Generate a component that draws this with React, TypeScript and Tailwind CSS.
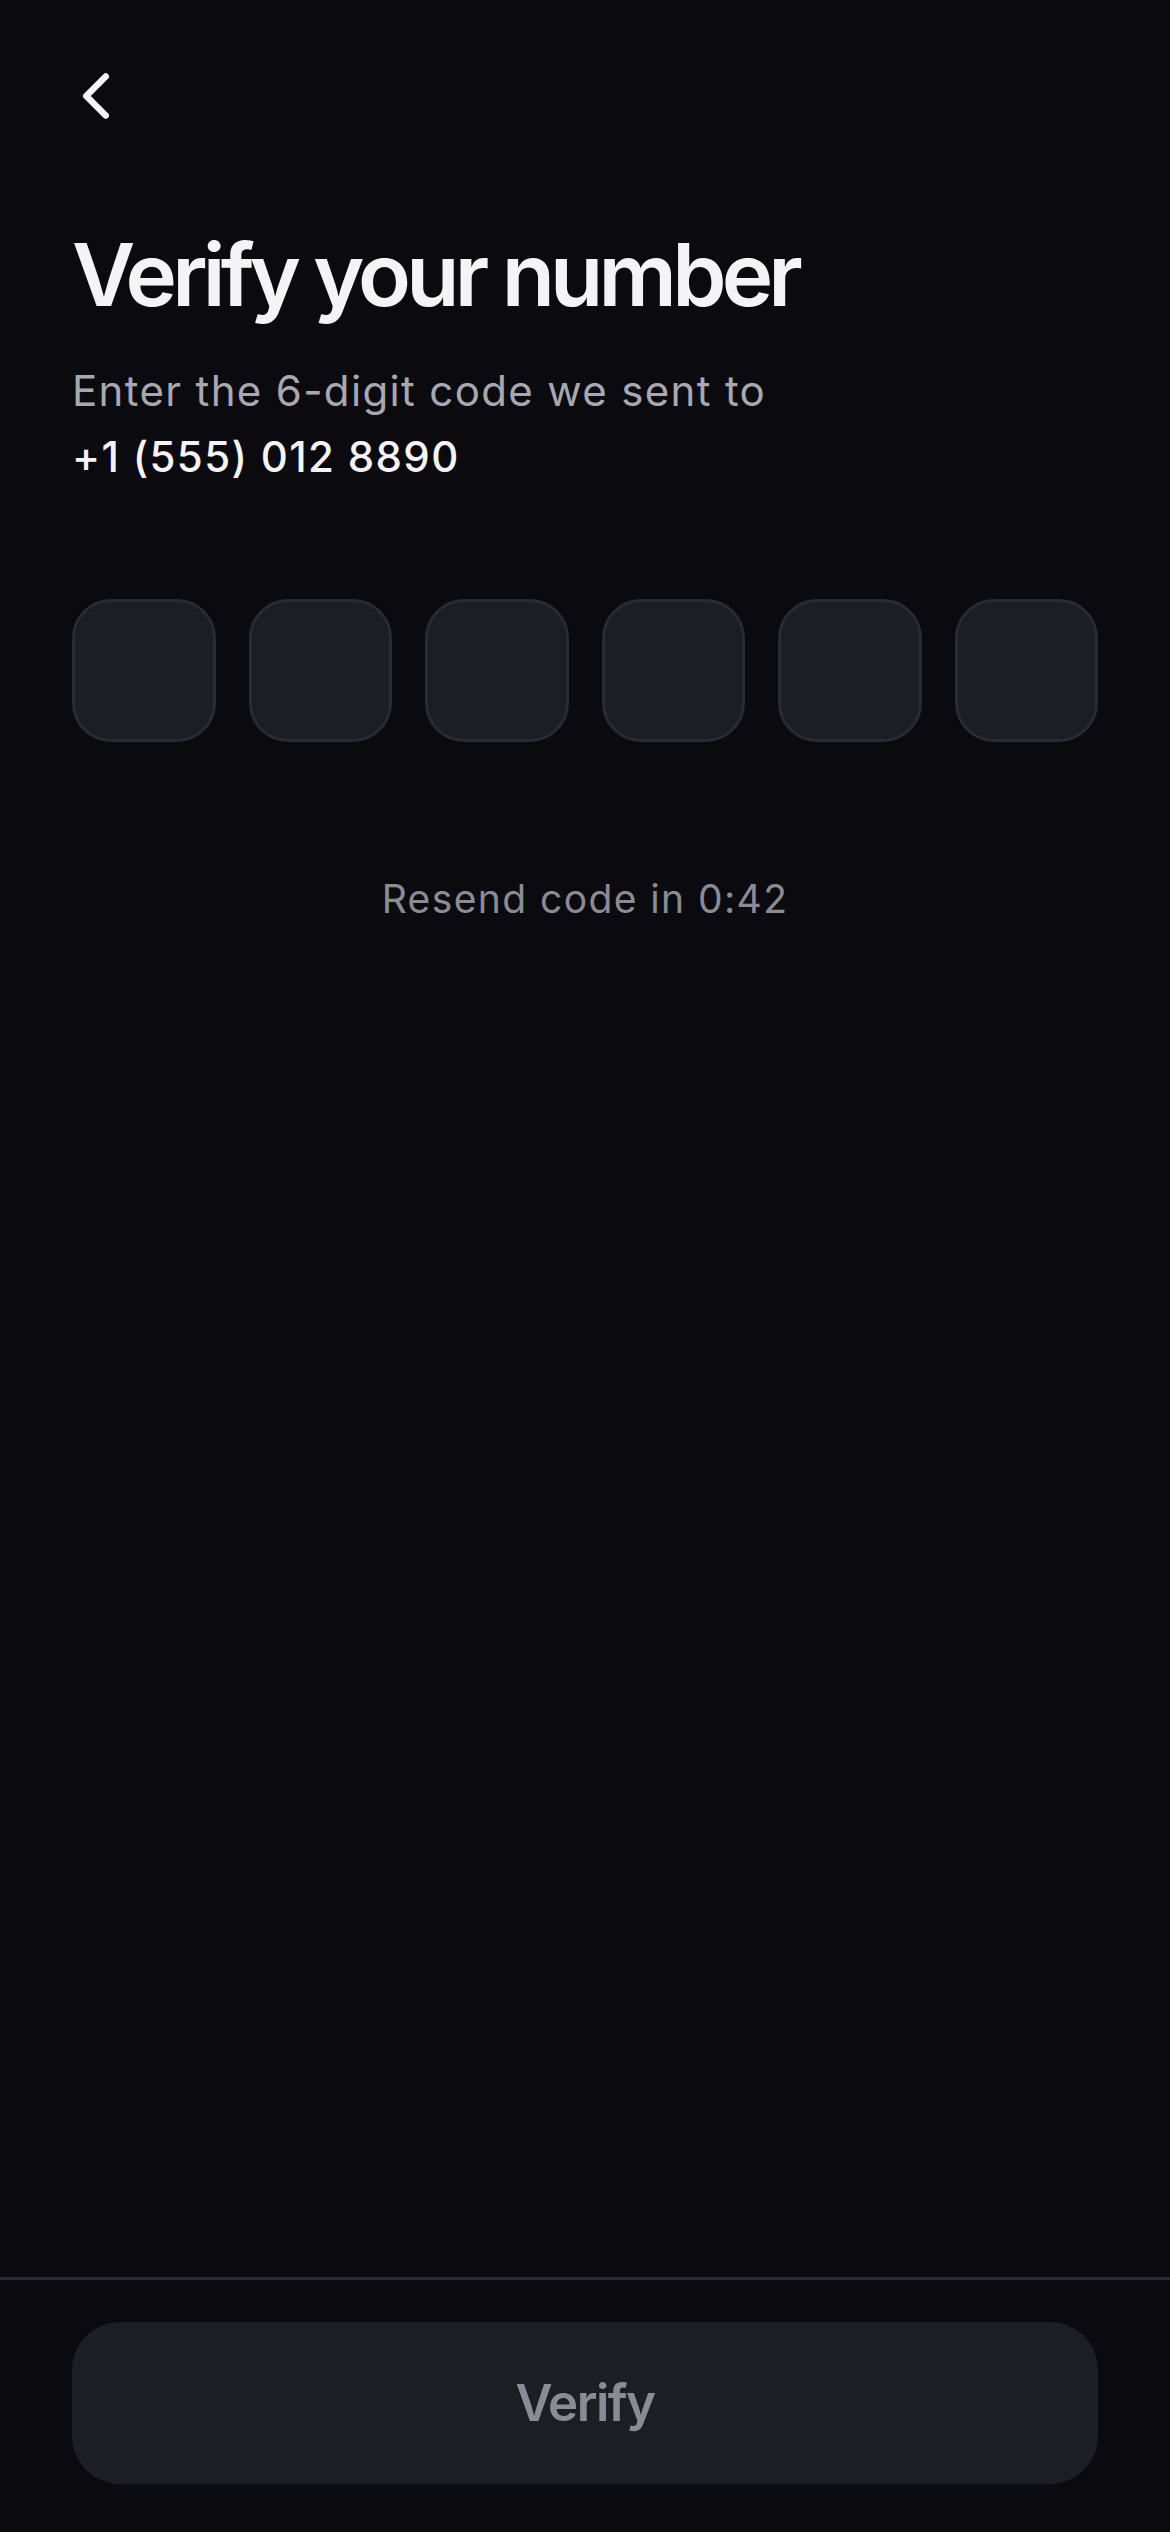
import React from "react";

const OtpBox: React.FC = () => (
  <div className="h-[143px] flex-1 rounded-[39px] border-[3px] border-[#2a2a32] bg-[#1d1d24]" />
);

const App: React.FC = () => {
  const digits = [0, 1, 2, 3, 4, 5];

  return (
    <div className="flex min-h-[2532px] w-full flex-col bg-[#0b0b0f] font-['Inter',sans-serif] text-[#f4f4f6]">
      {/* header */}
      <div className="pl-[57px] pt-[57px]">
        <button className="flex h-[78px] w-[78px] items-center justify-center">
          <svg width="78" height="78" viewBox="0 0 24 24" fill="none">
            <path
              d="m15 18-6-6 6-6"
              stroke="#f4f4f6"
              strokeWidth="2"
              strokeLinecap="round"
              strokeLinejoin="round"
            />
          </svg>
        </button>
      </div>

      <div className="px-[72px]">
        <h1 className="mt-[92px] text-[87px] font-semibold leading-[96px] tracking-[-0.055em]">
          Verify your number
        </h1>
        <p className="mt-[35px] text-[42px] leading-[66px] tracking-[0.032em] text-[#a8a8b3]">
          Enter the 6-digit code we sent to
          <br />
          <span className="font-medium text-[#f4f4f6]">+1 (555) 012 8890</span>
        </p>

        <div className="mt-[109px] flex gap-[33px]">
          {digits.map((d) => (
            <OtpBox key={d} />
          ))}
        </div>

        <p className="mt-[128px] text-center text-[39px] leading-[58px] tracking-[0.036em] text-[#8b8b96]">
          Resend code in 0:42
        </p>
      </div>

      <div className="flex-1" />

      {/* footer */}
      <div className="border-t-[3px] border-[#2a2a32] px-[72px] pb-[48px] pt-[42px]">
        <button className="flex h-[162px] w-full items-center justify-center rounded-[48px] bg-[#1d1d24] text-[51px] font-semibold tracking-[-0.03em] text-[#8b8b96]">
          Verify
        </button>
      </div>
    </div>
  );
};

export default App;
